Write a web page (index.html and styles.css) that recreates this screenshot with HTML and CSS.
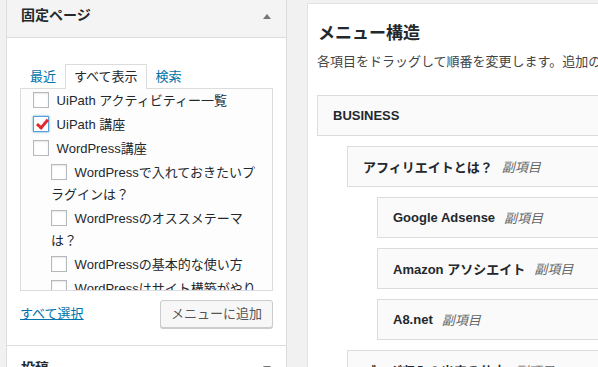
FILE: index.html
```html
<!DOCTYPE html>
<html lang="ja">
<head>
    <meta charset="UTF-8">
    <title>メニュー</title>
    <link rel="stylesheet" href="styles.css">
</head>
<body>

<div class="wrap">
    <!-- 左：追加する項目 -->
    <div class="side">
        <div class="section open">
            <div class="section-title">
                <h3>固定ページ</h3>
                <span class="arrow up"></span>
            </div>
            <div class="section-body">
                <ul class="tabs">
                    <li><a href="#">最近</a></li>
                    <li class="active">すべて表示</li>
                    <li><a href="#">検索</a></li>
                </ul>
                <div class="tab-panel">
                    <ul class="checklist">
                        <li><label><input type="checkbox"> UiPath アクティビティー一覧</label></li>
                        <li><label><input type="checkbox" class="focused" checked> UiPath 講座</label></li>
                        <li><label><input type="checkbox"> WordPress講座</label>
                            <ul class="children">
                                <li><label><input type="checkbox"> WordPressで入れておきたいプラグインは？</label></li>
                                <li><label><input type="checkbox"> WordPressのオススメテーマは？</label></li>
                                <li><label><input type="checkbox"> WordPressの基本的な使い方</label></li>
                                <li><label><input type="checkbox"> WordPressはサイト構築がやりやすい</label></li>
                            </ul>
                        </li>
                    </ul>
                </div>
                <div class="actions">
                    <a href="#" class="select-all">すべて選択</a>
                    <button class="add-btn">メニューに追加</button>
                </div>
            </div>
        </div>
        <div class="section">
            <div class="section-title">
                <h3>投稿</h3>
                <span class="arrow down"></span>
            </div>
        </div>
    </div>

    <!-- 右：メニュー構造 -->
    <div class="main">
        <h2>メニュー構造</h2>
        <p class="desc">各項目をドラッグして順番を変更します。追加の設定オプションを表示するには、項目の右の矢印をクリックしてください。</p>
        <ul class="menu">
            <li class="item depth-0"><span class="item-title">BUSINESS</span></li>
            <li class="item depth-1"><span class="item-title">アフィリエイトとは？</span><span class="sub">副項目</span></li>
            <li class="item depth-2"><span class="item-title">Google Adsense</span><span class="sub">副項目</span></li>
            <li class="item depth-2"><span class="item-title">Amazon アソシエイト</span><span class="sub">副項目</span></li>
            <li class="item depth-2"><span class="item-title">A8.net</span><span class="sub">副項目</span></li>
            <li class="item depth-1"><span class="item-title">ブログ収入の出来る仕方</span><span class="sub">副項目</span></li>
        </ul>
    </div>
</div>

</body>
</html>
```

FILE: styles.css
```css
body {
    font-family: "Liberation Sans", "Noto Sans CJK JP", sans-serif;
    font-size: 13px;
    color: #23282d;
    background-color: #f1f1f1;
    margin: 0;
    padding: 0;
    overflow: hidden;
}

ul {
    list-style: none;
    margin: 0;
    padding: 0;
}

a {
    color: #0073aa;
}

.wrap {
    display: flex;
    align-items: flex-start;
    gap: 20px;
    height: 367px;
    overflow: hidden;
}

/* 左カラム */
.side {
    width: 279px;
    margin-left: 6px;
    border-left: 1px solid #dcdcdc;
    border-right: 1px solid #dcdcdc;
    background-color: #fff;
    flex-shrink: 0;
}

.section-title {
    display: flex;
    justify-content: space-between;
    align-items: center;
    padding: 5px 14px 12px 14px;
    background-color: #f4f4f4;
    border-bottom: 1px solid #dcdcdc;
}

.section + .section .section-title {
    background-color: #fff;
    border-top: 1px solid #dcdcdc;
    padding-top: 12px;
}

.section-title h3 {
    margin: 0;
    font-size: 14px;
    line-height: 20px;
    font-weight: bold;
    color: #23282d;
}

.arrow {
    width: 0;
    height: 0;
    border-left: 4px solid transparent;
    border-right: 4px solid transparent;
    margin-right: 1px;
}

.arrow.up {
    border-bottom: 5px solid #72777c;
    margin-top: 3px;
}

.arrow.down {
    border-top: 5px solid #72777c;
}

.section-body {
    padding: 26px 13px 17px;
}

.tabs {
    display: flex;
    margin-left: 1px;
}

.tabs li {
    padding: 0 8px;
    line-height: 23px;
    border: 1px solid transparent;
    border-bottom: none;
}

.tabs a {
    text-decoration: none;
}

.tabs li.active {
    background-color: #fff;
    border-color: #dcdcdc;
    margin-bottom: -1px;
    padding-bottom: 1px;
    position: relative;
}

.tab-panel {
    height: 200px;
    overflow: hidden;
    border: 1px solid #dcdcdc;
    background-color: #fdfdfd;
    padding: 1px 0 0 12px;
}

.checklist {
    width: 231px;
}

.checklist li {
    line-height: 22px;
    margin-bottom: 2px;
}

.children {
    margin-top: 2px;
    padding-left: 18px;
}

.checklist input {
    -webkit-appearance: none;
    appearance: none;
    width: 16px;
    height: 16px;
    margin: 0 4px 0 0;
    border: 1px solid #b4b9be;
    background-color: #fff;
    box-shadow: inset 0 1px 2px rgba(0,0,0,0.1);
    vertical-align: -3px;
    position: relative;
}

.checklist input.focused {
    border-color: #5b9dd9;
    box-shadow: 0 0 2px rgba(30,140,190,0.8);
}

.checklist input:checked::before {
    content: "";
    position: absolute;
    left: 5px;
    top: 0px;
    width: 4px;
    height: 9px;
    border: solid #e0292f;
    border-width: 0 3px 3px 0;
    transform: rotate(40deg);
}

.actions {
    display: flex;
    justify-content: space-between;
    align-items: center;
    margin-top: 9px;
}

.select-all {
    line-height: 20px;
}

.add-btn {
    font-family: inherit;
    font-size: 13px;
    color: #555;
    line-height: 26px;
    padding: 0 10px;
    background-color: #f7f7f7;
    border: 1px solid #ccc;
    border-radius: 3px;
    box-shadow: 0 1px 0 #ccc;
    cursor: pointer;
}

/* 右カラム */
.main {
    flex: 1;
    margin-top: 3px;
    height: 400px;
    background-color: #fff;
    border-left: 1px solid #e2e2e2;
    border-top: 1px solid #e2e2e2;
    padding: 0 0 0 9px;
    white-space: nowrap;
    overflow: hidden;
}

.main h2 {
    margin: 18px 0 0 1px;
    font-size: 17px;
    line-height: 24px;
    font-weight: bold;
}

.desc {
    margin: 6px 0 0;
    color: #444;
    line-height: 20px;
}

.menu {
    margin-top: 23px;
}

.item {
    width: 380px;
    height: 39px;
    display: flex;
    align-items: center;
    padding-left: 15px;
    background-color: #fafafa;
    border: 1px solid #dcdcdc;
    margin-bottom: 10px;
}

.item-title {
    font-weight: bold;
    color: #23282d;
}

.sub {
    color: #666;
    font-style: italic;
    margin-left: 9px;
}

.depth-1 {
    margin-left: 30px;
}

.depth-2 {
    margin-left: 60px;
}
```
